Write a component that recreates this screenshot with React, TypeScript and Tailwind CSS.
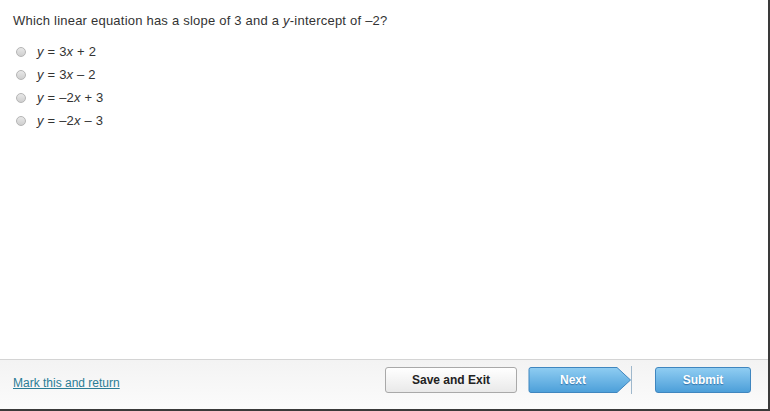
import React from "react";

const options = [
  { a: "3", b: "+ 2" },
  { a: "3", b: "\u2013 2" },
  { a: "\u20132", b: "+ 3" },
  { a: "\u20132", b: "\u2013 3" },
];

function Radio() {
  return (
    <span className="inline-block w-[10px] h-[10px] rounded-full border border-[#b5b5b5] bg-gradient-to-b from-[#e8e8e8] to-[#cfcfcf]" />
  );
}

export default function App() {
  return (
    <div
      className="w-[770px] h-[411px] flex flex-col bg-white border-r-2 border-b-2 border-[#3a3a3a] text-[#333]"
      style={{ fontFamily: '"Liberation Sans", Arial, sans-serif' }}
    >
      <div className="flex-1 pl-[13px] pt-[13px]">
        <p className="text-[13px] leading-[16px] tracking-[0.22px]">
          Which linear equation has a slope of 3 and a <i>y</i>-intercept of –2?
        </p>
        <div className="mt-[12px] flex flex-col">
          {options.map((o, i) => (
            <div key={i} className="flex items-center h-[22.8px]">
              <span className="ml-[3px] mr-[11px] flex items-center">
                <Radio />
              </span>
              <span className="text-[13px] leading-[16px] tracking-[0.2px]">
                <i>y</i> = {o.a}
                <i>x</i> {o.b}
              </span>
            </div>
          ))}
        </div>
      </div>
      <div className="h-[50px] border-t border-[#d4d4d4] bg-gradient-to-b from-[#f3f3f3] to-[#fbfbfb] flex items-start pt-[6px] pl-[13px]">
        <a className="text-[12px] leading-[14px] text-[#2b7d96] underline mt-[10px]" href="#">
          Mark this and return
        </a>
        <div className="ml-auto flex items-center mr-[17px]">
          <button className="w-[132px] h-[26px] rounded-[3px] border border-[#a9a9a9] bg-gradient-to-b from-white to-[#e9e9e9] text-[12px] font-bold text-[#222]">
            Save and Exit
          </button>
          <div className="ml-[11px] relative flex items-center h-[28px]">
            <svg width="104" height="28" viewBox="0 0 104 28" className="block">
              <defs>
                <linearGradient id="ng" x1="0" y1="0" x2="0" y2="1">
                  <stop offset="0" stopColor="#8fcdf2" />
                  <stop offset="1" stopColor="#4c9fd9" />
                </linearGradient>
              </defs>
              <path
                d="M3 1.5 H89 L102.5 14 L89 26.5 H3 Q1 26.5 1 24.5 V3.5 Q1 1.5 3 1.5 Z"
                fill="url(#ng)"
                stroke="#3f86bf"
                strokeWidth="1"
              />
              <line x1="103.5" y1="0" x2="103.5" y2="28" stroke="#9fb8cc" strokeWidth="1" />
            </svg>
            <span
              className="absolute left-0 w-[90px] text-center text-[12px] font-bold text-white"
              style={{ textShadow: "0 1px 1px rgba(0,60,120,0.5)" }}
            >
              Next
            </span>
          </div>
          <button
            className="ml-[23px] w-[96px] h-[26px] rounded-[3px] border border-[#3f86bf] bg-gradient-to-b from-[#8fcdf2] to-[#4c9fd9] text-[12px] font-bold text-white"
            style={{ textShadow: "0 1px 1px rgba(0,60,120,0.5)" }}
          >
            Submit
          </button>
        </div>
      </div>
    </div>
  );
}
